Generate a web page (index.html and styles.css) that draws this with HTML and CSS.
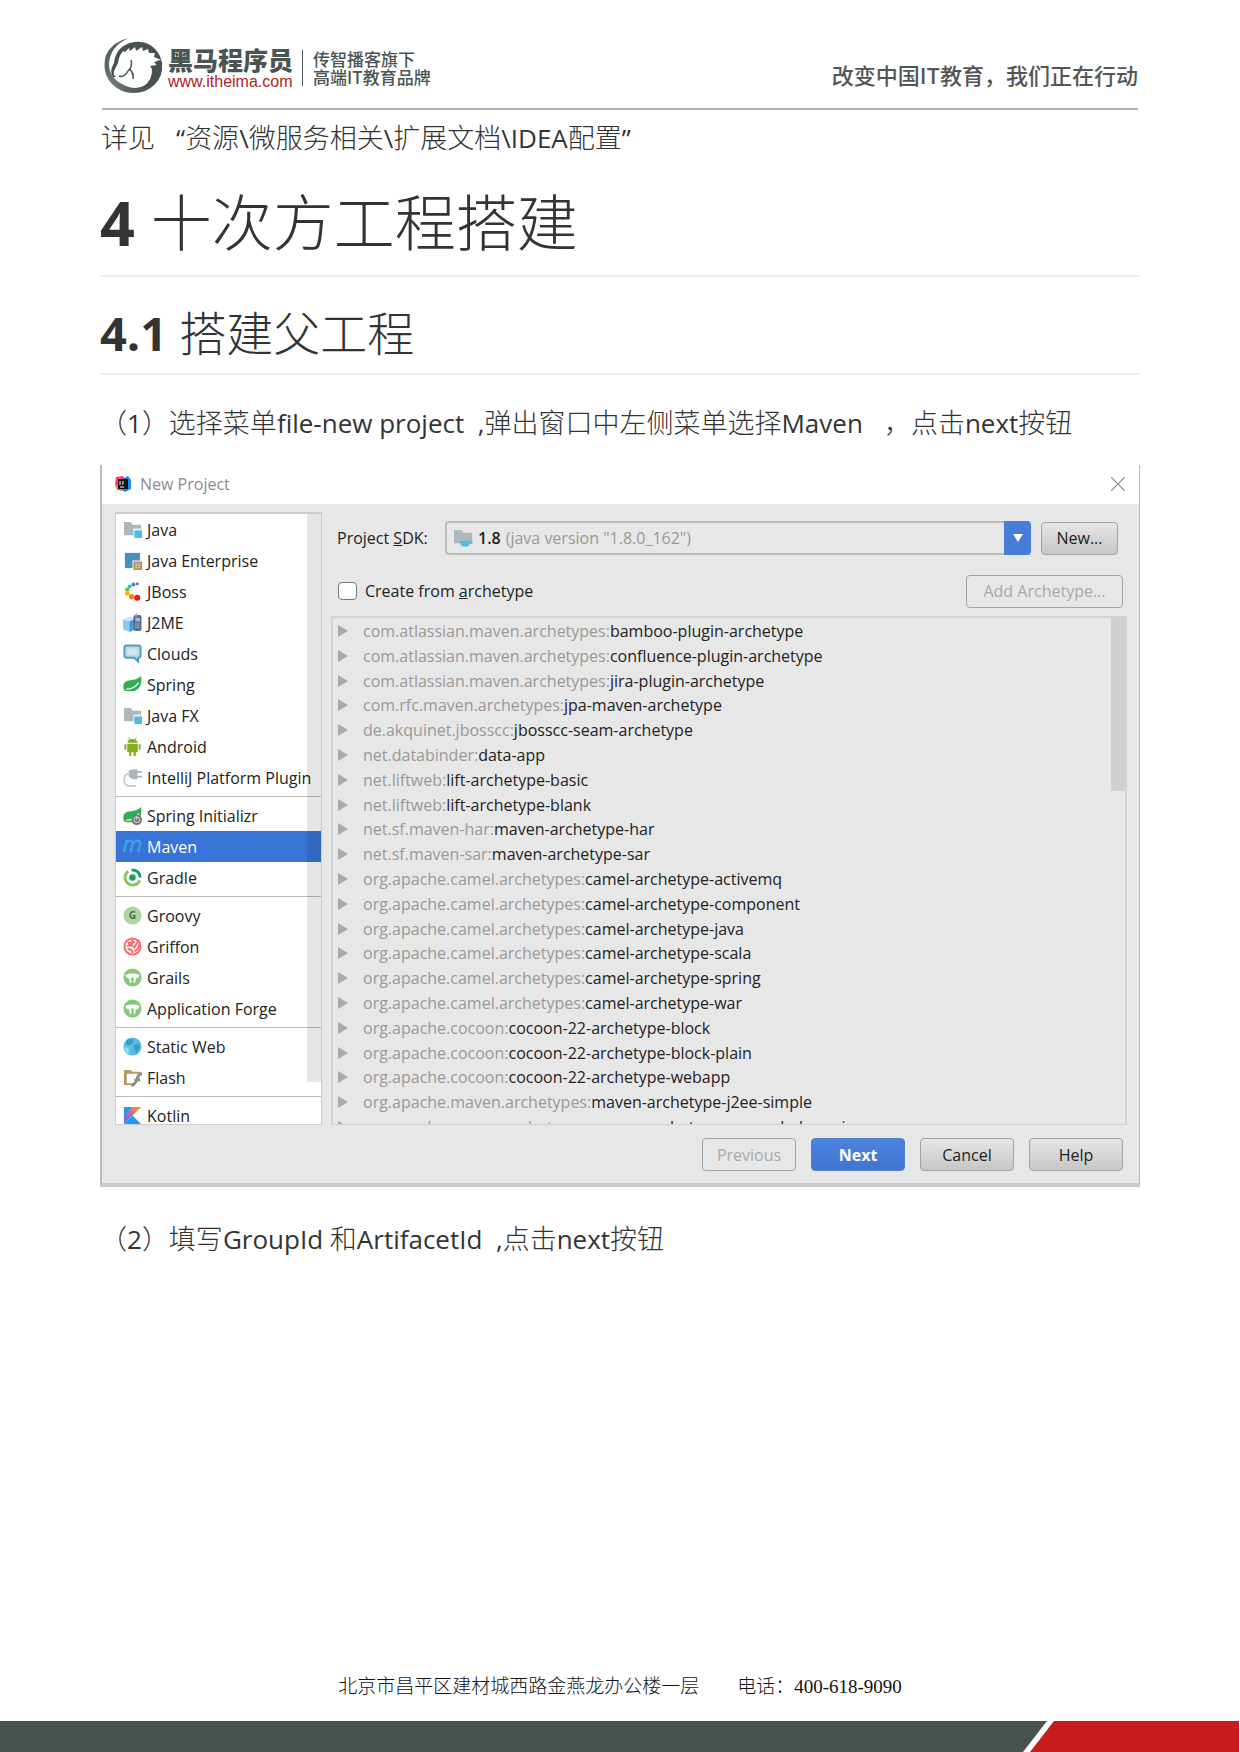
FILE: index.html
```
<!DOCTYPE html>
<html lang="zh-CN">
<head>
<meta charset="utf-8">
<meta name="viewport" content="width=device-width, initial-scale=1">
<title>十次方工程搭建</title>
<link rel="stylesheet" href="styles.css">
</head>
<body>
<svg width="0" height="0" class="defs" aria-hidden="true">
  <symbol id="folder" viewBox="0 0 20 20"><path fill="#adb8be" d="M1 2h7l2 3h9v11H1z"/><path fill="#e9f6fb" d="M11 9h9v10h-9z"/><path fill="#4fbbe6" d="M12 11h8v8h-8z"/></symbol>
  <symbol id="ring" viewBox="0 0 20 20"><circle cx="10" cy="10" r="9.500" fill="#86c877"/><path fill="#fff" d="M2.500 7Q10 4.500 17.500 7L16.500 10L13.500 11L12.800 15.500H11L11.500 10H8.500L9 15.500H7.200L6.500 11L3.500 10z"/></symbol>
  <symbol id="leaf" viewBox="0 0 20 20"><path fill="#2fae52" d="M19 1Q21 17 8 17Q3 17.500 1 16Q-2 6 8 5.500Q15 5 19 1z"/><path fill="none" stroke="#fff" stroke-width="1.300" d="M3 15Q12 15 16.500 8"/></symbol>
  <symbol id="tri" viewBox="0 0 10 12"><path fill="#a9a9a9" d="M0 0L10 6L0 12z"/></symbol>
</svg>
<div class="page">
  <header class="masthead">
    <a class="brand" href="#">
      <svg class="horse" viewBox="0 0 60 56" aria-hidden="true">
        <defs><linearGradient id="hg" x1="0" y1="0" x2="1" y2="1"><stop offset="0" stop-color="#4c5756"/><stop offset=".5" stop-color="#6d7677"/><stop offset="1" stop-color="#3c4645"/></linearGradient></defs>
        <path fill="url(#hg)" d="M25 0Q9 3 2 17Q-3 34 8 46Q17 55 29 55Q43 55 51 46Q59 37 58 24L54 22L52 27Q52 40 44 45Q34 53 22 48Q5 41 5 26Q6 8 25 0z"/>
        <path fill="#465150" d="M10 25Q12 9 26 5Q41 1 51 11Q57 17 58 26Q59 38 51 46Q45 51 38 50Q49 42 48 31L46 28L53 27L50 24L57 22L50 19L51 15L45 15L44 11L39 13L38 9L32 13L31 9L26 13L25 10L21 14L19 13Q15 18 14 25L10 33Q9 37 12 39L9 39Q5 33 10 25z"/>
        <path fill="none" stroke="#465150" stroke-width="1.500" d="M15 38Q20 40 24 33Q29 29 27 22M25 31Q30 34 29 41"/>
      </svg>
      <span class="brand-name"><strong>黑马程序员</strong><span class="site">www.itheima.com</span></span>
      <span class="tagline">传智播客旗下<br>高端IT教育品牌</span>
    </a>
    <p class="slogan">改变中国IT教育，我们正在行动</p>
  </header>

  <main class="content">
    <p class="note">详见&nbsp;&nbsp; <span class="latin">“</span>资源<span class="latin">\</span>微服务相关<span class="latin">\</span>扩展文档<span class="latin">\IDEA</span>配置<span class="latin">”</span></p>
    <h1>4 <span class="han">十次方工程搭建</span></h1>
    <h2>4.1 <span class="han">搭建父工程</span></h2>
    <p class="step">（<span class="latin">1</span>）选择菜单<span class="latin">file-new project&nbsp; ,</span>弹出窗口中左侧菜单选择<span class="latin">Maven</span>&nbsp;&nbsp; ，点击<span class="latin">next</span>按钮</p>

    <section class="dialog" aria-label="New Project">
      <div class="titlebar">
        <svg class="icon-app" viewBox="0 0 16 16" aria-hidden="true"><path fill="#fc3c72" d="M1 1l7-1 3 5-4 9-5-1-2-5z"/><path fill="#f58b35" d="M0 9l5 1 2 5-5-1z"/><path fill="#1b8cf5" d="M9 2l4-2 3 4v9l-6 3-5-3z"/><path fill="#111" d="M3 3h10v10H3z"/><path stroke="#fff" d="M5 5v4M8 5v3H7M5 11h4"/></svg>
        <span class="title">New Project</span>
        <button class="close" type="button" aria-label="Close"><svg viewBox="0 0 14 14"><path stroke="#8a8a8a" stroke-width="1.200" d="M0 0L14 14M14 0L0 14"/></svg></button>
      </div>
      <div class="panes">
        <nav class="types" aria-label="Project types">
          <ul>
            <li><svg><use href="#folder"/></svg>Java</li>
            <li><svg viewBox="0 0 20 20"><path fill="#4792bd" d="M2 2h16v16H2z"/><path fill="#fff" d="M10 10h10v10H10z"/><path fill="#b18f60" d="M11 11h9v9h-9z"/><path stroke="#f4e5c8" d="M13 13.500h2M16 13.500h2M13 15.500h2M16 15.500h2M13 17.500h2M16 17.500h2"/></svg>Java Enterprise</li>
            <li><svg viewBox="0 0 20 20"><circle cx="15" cy="2" r="1.500" fill="#7a52b8"/><circle cx="11" cy="2.500" r="2" fill="#397fd5"/><circle cx="7" cy="4.500" r="2" fill="#2fb3df"/><circle cx="4.500" cy="8" r="2.300" fill="#64c832"/><circle cx="4.500" cy="12" r="2.500" fill="#f7b500"/><circle cx="9" cy="15.500" r="2.800" fill="#f7801e"/><circle cx="15" cy="16.500" r="3.200" fill="#f01818"/></svg>JBoss</li>
            <li><svg viewBox="0 0 20 20"><path fill="#8cc8f0" d="M0 7l7-3 5 2v11l-5 3-7-3z"/><path fill="#459ad4" d="M7 9l5-3v11l-5 3z"/><path fill="#c9e8fb" d="M0 7l7-3 5 2-5 3z"/><rect x="11" y="2" width="8.500" height="17" rx="2.500" fill="#52688c"/><path fill="#a4b8d4" d="M13 0h2v4h-2zM13 5h5v4h-5z"/><path stroke="#dbe5f2" stroke-dasharray="1.200 1" d="M13 11.500h5M13 13.500h5M13 15.500h5"/></svg>J2ME</li>
            <li><svg viewBox="0 0 20 20"><path fill="#b9d9e9" stroke="#4e9cc4" stroke-width="2" d="M4 1.500h12q2.500 0 2.500 2.500v8q0 2.500-2.500 2.500v4l-4-4H4q-2.500 0-2.500-2.500V4q0-2.500 2.500-2.500z"/><rect x="4.500" y="4.500" width="11" height="7" rx="2" fill="#d3e7f1"/></svg>Clouds</li>
            <li><svg><use href="#leaf"/></svg>Spring</li>
            <li><svg><use href="#folder"/></svg>Java FX</li>
            <li><svg viewBox="0 0 20 20"><path fill="#86ad1e" d="M4.500 6Q5 2 10 2t5.500 4zM4.500 7h11v9h-11zM1.500 7.500h2v6h-2zM16.500 7.500h2v6h-2zM6.500 15h2.300v5H6.500zM11.200 15h2.300v5h-2.300z"/><path stroke="#86ad1e" d="M6 .5l1.500 2.500M14 .5L12.500 3"/></svg>Android</li>
            <li><svg viewBox="0 0 20 20"><path fill="#aab5bb" d="M6 3q3-2 9-2v11q-6 0-9-3z"/><path fill="none" stroke="#aab5bb" stroke-width="1.800" d="M14 4h6M14 9h6"/><path fill="none" stroke="#c8d0d5" stroke-width="2" d="M7 6Q1 6 1 12q0 7 7 7h6"/></svg>IntelliJ Platform Plugin</li>
          </ul>
          <ul>
            <li><svg viewBox="0 0 20 20"><use href="#leaf"/><circle cx="14.500" cy="14.500" r="5.500" fill="#777"/><circle cx="14.500" cy="14.500" r="3" fill="none" stroke="#ddd"/><path stroke="#ddd" d="M14.500 10.500v4"/></svg>Spring Initializr</li>
            <li class="selected" aria-current="true"><svg viewBox="0 0 20 20"><path fill="none" stroke="#3ea5dd" stroke-width="2.400" d="M1 16L4 3M3 7.500Q5 3.500 8 3.800Q10.800 4.500 9.800 8L8 16M9.800 8Q12 3.500 15.500 3.800Q19 4.500 17.800 8.500L16 16"/></svg>Maven</li>
            <li><svg viewBox="0 0 20 20"><circle cx="10" cy="10" r="3.400" fill="#15a05d"/><path fill="none" stroke="#0f9f63" stroke-width="3" d="M9 2Q17.500 2 18 10"/><path fill="none" stroke="#8fc060" stroke-width="3" d="M5.500 3.500Q1 7 2.500 12.500Q5 18 10 18Q15.500 18 17.500 13"/></svg>Gradle</li>
          </ul>
          <ul>
            <li><svg viewBox="0 0 20 20"><circle cx="10" cy="10" r="9.500" fill="#abd69d"/><text x="10" y="14" text-anchor="middle" class="glyph">G</text></svg>Groovy</li>
            <li><svg viewBox="0 0 20 20"><circle cx="10" cy="10" r="8.500" fill="#fff" stroke="#f46b6e" stroke-width="2"/><path fill="none" stroke="#f46b6e" stroke-width="2.200" d="M5 6h5L6 9h5M5 13q5-1 5 4M11 12L17 3M12 15Q17 13 17 8M9 3l3 3"/></svg>Griffon</li>
            <li><svg><use href="#ring"/></svg>Grails</li>
            <li><svg><use href="#ring"/></svg>Application Forge</li>
          </ul>
          <ul>
            <li><svg viewBox="0 0 20 20"><circle cx="10" cy="10" r="9.500" fill="#58bde5"/><path fill="#3a9bc9" d="M4 3q5-2 7 0l-1 4-4 2-3-2zM11 8l5-1 2 4-4 6-2-4z"/><path fill="#9edcf3" d="M2 10l4 2 1 6Q2 16 2 10z"/></svg>Static Web</li>
            <li><svg viewBox="0 0 20 20"><path fill="#bd9663" d="M1 2h7l2 2h8v2H4v10h8v2H1z"/><path fill="none" stroke="#8b8b8b" stroke-width="3" d="M20 6q-4 0-5 5t-6 8M12 12.500h6"/></svg>Flash</li>
          </ul>
          <ul>
            <li><svg viewBox="0 0 20 20"><defs><linearGradient id="kg" x1="0" y1="1" x2="1" y2="0"><stop offset=".2" stop-color="#6f75e0"/><stop offset=".5" stop-color="#c56aa5"/><stop offset=".8" stop-color="#f5883d"/></linearGradient></defs><path fill="#1b9df0" d="M1 1h9L1 11z"/><path fill="url(#kg)" d="M10 1h9L1 19V10z"/><path fill="#1b9df0" d="M1 19l9-9 9 9z"/></svg>Kotlin</li>
          </ul>
          <span class="thumb"></span>
        </nav>

        <form class="settings">
          <div class="sdk-row">
            <label for="sdk">Project <u>S</u>DK:</label>
            <div class="combo">
              <svg viewBox="0 0 20 20" aria-hidden="true"><path fill="#adb8be" d="M0 1h8l2 3h9v11H0z"/><path fill="#4fbbe6" d="M6 12.500h13.500v3h-3q-1 3-4 3h-2q-4 0-4.500-6z"/></svg>
              <span>1.8</span>
              <select id="sdk"><option>(java version "1.8.0_162")</option></select>
              <span class="arrow"><svg viewBox="0 0 10 8"><path fill="#fff" d="M0 0h10L5 8z"/></svg></span>
            </div>
            <button class="btn new" type="button">New...</button>
          </div>
          <div class="arch-row">
            <input type="checkbox" id="arch"><label for="arch">Create from <u>a</u>rchetype</label>
            <button class="btn add" type="button" disabled>Add Archetype...</button>
          </div>
          <div class="tree">
            <ul>
              <li><svg><use href="#tri"/></svg><span>com.atlassian.maven.archetypes:</span>bamboo-plugin-archetype</li>
              <li><svg><use href="#tri"/></svg><span>com.atlassian.maven.archetypes:</span>confluence-plugin-archetype</li>
              <li><svg><use href="#tri"/></svg><span>com.atlassian.maven.archetypes:</span>jira-plugin-archetype</li>
              <li><svg><use href="#tri"/></svg><span>com.rfc.maven.archetypes:</span>jpa-maven-archetype</li>
              <li><svg><use href="#tri"/></svg><span>de.akquinet.jbosscc:</span>jbosscc-seam-archetype</li>
              <li><svg><use href="#tri"/></svg><span>net.databinder:</span>data-app</li>
              <li><svg><use href="#tri"/></svg><span>net.liftweb:</span>lift-archetype-basic</li>
              <li><svg><use href="#tri"/></svg><span>net.liftweb:</span>lift-archetype-blank</li>
              <li><svg><use href="#tri"/></svg><span>net.sf.maven-har:</span>maven-archetype-har</li>
              <li><svg><use href="#tri"/></svg><span>net.sf.maven-sar:</span>maven-archetype-sar</li>
              <li><svg><use href="#tri"/></svg><span>org.apache.camel.archetypes:</span>camel-archetype-activemq</li>
              <li><svg><use href="#tri"/></svg><span>org.apache.camel.archetypes:</span>camel-archetype-component</li>
              <li><svg><use href="#tri"/></svg><span>org.apache.camel.archetypes:</span>camel-archetype-java</li>
              <li><svg><use href="#tri"/></svg><span>org.apache.camel.archetypes:</span>camel-archetype-scala</li>
              <li><svg><use href="#tri"/></svg><span>org.apache.camel.archetypes:</span>camel-archetype-spring</li>
              <li><svg><use href="#tri"/></svg><span>org.apache.camel.archetypes:</span>camel-archetype-war</li>
              <li><svg><use href="#tri"/></svg><span>org.apache.cocoon:</span>cocoon-22-archetype-block</li>
              <li><svg><use href="#tri"/></svg><span>org.apache.cocoon:</span>cocoon-22-archetype-block-plain</li>
              <li><svg><use href="#tri"/></svg><span>org.apache.cocoon:</span>cocoon-22-archetype-webapp</li>
              <li><svg><use href="#tri"/></svg><span>org.apache.maven.archetypes:</span>maven-archetype-j2ee-simple</li>
              <li><svg><use href="#tri"/></svg><span>org.apache.maven.archetypes:</span>maven-archetype-marmalade-mojo</li>
            </ul>
            <span class="thumb"></span>
          </div>
        </form>
      </div>
      <div class="actions">
        <button class="btn" type="button" disabled>Previous</button>
        <button class="btn primary" type="button">Next</button>
        <button class="btn" type="button">Cancel</button>
        <button class="btn" type="button">Help</button>
      </div>
    </section>

    <p class="step">（<span class="latin">2</span>）填写<span class="latin">GroupId </span>和<span class="latin">ArtifacetId&nbsp; ,</span>点击<span class="latin">next</span>按钮</p>
  </main>

  <footer>
    <address><span>北京市昌平区建材城西路金燕龙办公楼一层</span><span>电话：400-618-9090</span></address>
    <div class="bars"><span class="dark"></span><span class="red"></span></div>
  </footer>
</div>
</body>
</html>
```
FILE: styles.css
```
* { box-sizing: border-box; }
body { margin: 0; background: #fff; color: #333; font: 27px/36px "Open Sans", "Noto Sans CJK SC", sans-serif; }
h1, h2, p, ul { margin: 0; padding: 0; }
ul { list-style: none; }
button, select, input { font: inherit; color: inherit; margin: 0; }
svg { display: block; flex: none; }
.defs { position: absolute; }

.page { min-height: 100vh; display: flex; flex-direction: column; }

.masthead { margin: 0 102px; height: 110px; padding-top: 38px; border-bottom: 2px solid #b0b0b0; display: flex; justify-content: space-between; align-items: flex-start; font-family: "Noto Sans CJK SC", sans-serif; }
.brand { display: flex; color: #4a5453; text-decoration: none; }
.horse { width: 60px; height: 56px; margin-left: 2px; }
.brand-name { display: flex; flex-direction: column; padding: 8px 9px 0 4px; }
.brand-name strong { font-size: 25px; line-height: 26px; font-weight: 900; }
.site { font: 16px/20px "Liberation Sans", sans-serif; color: #ae2322; }
.tagline { align-self: flex-start; margin-top: 12px; padding-left: 10px; border-left: 1px solid #4a5453; font-size: 17px; line-height: 18px; font-weight: 500; }
.slogan { padding-top: 20px; font-size: 22px; line-height: 32px; font-weight: 500; color: #555; }

.content { padding: 0 100px; }
.note { padding: 10px 1px 0; font-weight: 300; }
h1, h2 { border-bottom: 2px solid #eee; font-weight: 700; color: #333; }
h1 { padding: 18px 0 14px; font-size: 61px; line-height: 76px; margin-top: 11px; }
h2 { padding: 12px 0; font-size: 47px; line-height: 56px; margin-top: 16px; }
.han { font-weight: 300; }
.latin { font-size: 26px; font-weight: 400; }
.step { margin: 30px 0 24px; font-weight: 300; }
.dialog + .step { margin-top: 34px; }

.dialog { border: 2px solid #bbb; border-top: 0; border-right-width: 1px; border-bottom: 4px solid #c9c9c9; background: #e7e7e7; color: #222; font: 500 16px/24px "Open Sans", sans-serif; }
.titlebar { display: flex; align-items: center; gap: 9px; height: 39px; padding: 0 14px 1px 13px; background: #fff; color: #8c8c8c; font-weight: 400; }
.icon-app { width: 16px; height: 16px; }
.close { margin-left: auto; padding: 0; border: 0; background: none; }
.close svg { width: 14px; height: 14px; }
.panes { display: grid; grid-template-columns: 207px 1fr; gap: 9px; height: 621px; padding: 8px 12px 0 13px; }

.types { position: relative; overflow: hidden; border: 1px solid #ccc; border-top-width: 2px; background: #fff; }
.types ul + ul { margin-top: 3px; padding-top: 3px; border-top: 1px solid #bbb; }
.types li { display: flex; align-items: center; gap: 5px; height: 31px; padding-left: 7px; white-space: nowrap; }
.types svg { width: 19px; height: 19px; }
.types .selected { background: #3874d8; color: #fff; }
.glyph { font: 700 11px "Open Sans", sans-serif; fill: #566b50; }
.thumb { position: absolute; top: 0; right: 0; width: 14px; background: rgba(0, 0, 0, .1); }
.types .thumb { height: 568px; }

.settings { display: flex; flex-direction: column; min-width: 0; min-height: 0; padding-top: 9px; }
.sdk-row, .arch-row { display: flex; align-items: center; height: 34px; }
.sdk-row { padding: 0 9px 0 6px; gap: 10px; }
.sdk-row label { width: 98px; white-space: nowrap; }
.combo { flex: 1; display: flex; align-items: center; gap: 5px; height: 34px; padding-left: 7px; border: 2px solid #bbb; border-right: 0; border-radius: 4px; font-weight: 600; }
.combo > svg { width: 19px; height: 19px; }
.combo select { flex: 1; min-width: 0; appearance: none; padding: 0; border: 0; background: transparent; color: #999; font-weight: 400; }
.arrow { display: grid; place-items: center; width: 27px; height: 34px; border-radius: 0 4px 4px 0; background: #477cd8; }
.arrow svg { width: 10px; height: 8px; }
.arch-row { margin: 19px 0 8px; padding: 0 4px 0 7px; }
input[type="checkbox"] { appearance: none; width: 19px; height: 18px; margin-right: 8px; border: 1px solid #777; border-radius: 4px; background: #fff; }
.btn { width: 94px; height: 33px; padding: 0; border: 1px solid #a3a3a3; border-radius: 4px; background: linear-gradient(#e6e6e6, #c6c6c6); }
.btn:disabled { background: none; color: #aaa; }
.btn.primary { border-color: #5580c5; background: linear-gradient(#4a83e0, #4175cd); color: #fff; font-weight: 700; }
.btn.new { width: 77px; }
.btn.add { width: 157px; margin-left: auto; }

.tree { position: relative; flex: 1; min-height: 0; overflow: hidden; border: 2px solid #d2d2d2; border-bottom-width: 1px; }
.tree ul { display: flex; flex-direction: column; justify-content: space-between; height: 520px; margin-top: 1px; padding-left: 5px; }
.tree li { display: flex; align-items: center; height: 24px; white-space: nowrap; }
.tree li svg { width: 10px; height: 12px; margin-right: 15px; }
.tree li span { color: #999; font-weight: 400; }
.tree .thumb { height: 173px; }

.actions { display: flex; justify-content: flex-end; gap: 15px; padding: 13px 16px 12px; }

footer { margin-top: auto; }
address { display: flex; justify-content: center; gap: 38px; padding-bottom: 22px; color: #111; font: normal 300 19px/24px "Liberation Serif", "Noto Sans CJK SC", serif; }
.bars { display: flex; height: 31px; }
.dark { flex: 1; background: #4a5251; clip-path: polygon(0 0, 100% 0, calc(100% - 24px) 100%, 0 100%); }
.red { width: 209px; margin: 0 1px 0 -17px; background: #c81b1c; clip-path: polygon(24px 0, 100% 0, 100% 100%, 0 100%); }
```
